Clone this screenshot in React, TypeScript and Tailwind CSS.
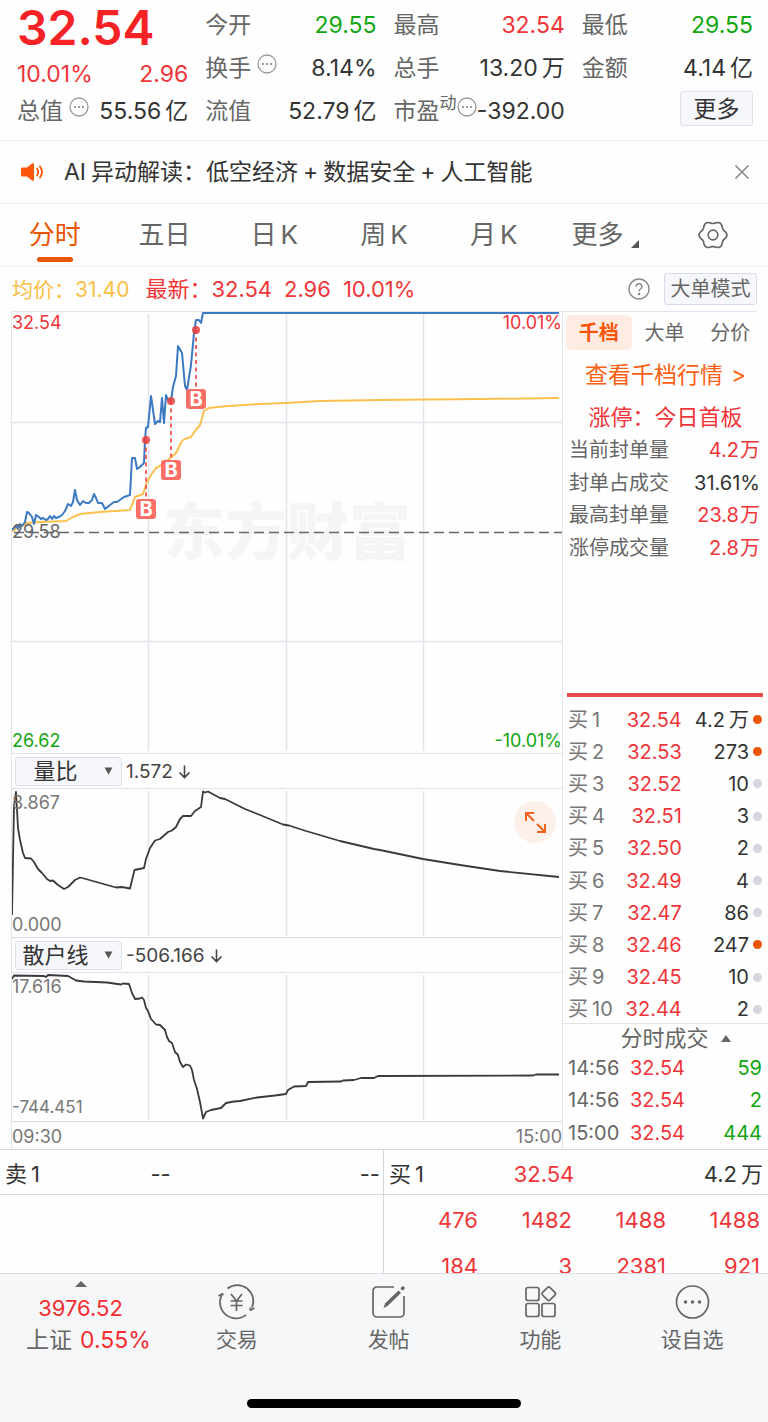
import { useState } from "react";
import type { ReactNode } from "react";

type Tone = "red" | "green" | "dark";

const toneClass: Record<Tone, string> = {
  red: "text-[#f03539]",
  green: "text-[#12a512]",
  dark: "text-[#333333]",
};

const bids = [
  { level: 1, price: "32.54", qty: "4.2", unit: "万", hot: true },
  { level: 2, price: "32.53", qty: "273", hot: true },
  { level: 3, price: "32.52", qty: "10", hot: false },
  { level: 4, price: "32.51", qty: "3", hot: false },
  { level: 5, price: "32.50", qty: "2", hot: false },
  { level: 6, price: "32.49", qty: "4", hot: false },
  { level: 7, price: "32.47", qty: "86", hot: false },
  { level: 8, price: "32.46", qty: "247", hot: true },
  { level: 9, price: "32.45", qty: "10", hot: false },
  { level: 10, price: "32.44", qty: "2", hot: false },
];

const limitStats: { label: string; value: string; unit?: string; tone: Tone }[] = [
  { label: "当前封单量", value: "4.2", unit: "万", tone: "red" },
  { label: "封单占成交", value: "31.61%", tone: "dark" },
  { label: "最高封单量", value: "23.8", unit: "万", tone: "red" },
  { label: "涨停成交量", value: "2.8", unit: "万", tone: "red" },
];

const trades = [
  { time: "14:56", price: "32.54", qty: "59" },
  { time: "14:56", price: "32.54", qty: "2" },
  { time: "15:00", price: "32.54", qty: "444" },
];

const queue = [
  ["476", "1482", "1488", "1488"],
  ["184", "3", "2381", "921"],
];

const priceLine =
  "12,530 15,527 17,526 18,529 20,524 22,526 25,522 27,512 29,513 32,517 34,524 36,515 39,517 41,519 43,518 46,520 48,519 50,516 52,519 54,516 56,518 59,517 62,515 65,511 68,504 71,506 73,502 75,490 77,500 80,505 83,501 86,503 89,503 92,500 94,494 96,498 98,503 102,503 105,509 110,505 114,502 117,502 124,497 130,495 132,458 135,458 137,469 140,467 144,463 145,440 146,428 148,427 151,396 155,424 158,421 160,422 162,398 164,423 166,395 168,400 171,401 173,387 176,376 178,346 182,353 185,386 187,390 191,365 194,333 196,320 199,320 201,323 203,313 559,313";
const averageLine =
  "12,531 27,523 40,522 66,521 73,517 80,514 100,512 130,510 135,497 143,494 147,482 151,475 156,468 160,466 168,460 176,453 182,441 185,439 191,437 195,431 200,425 204,411 209,408 228,406 260,404 286,403 320,401 380,400 480,399 559,398";
const ratioLine =
  "12,915 14,806 16,792 18,828 20,840 23,853 25,858 31,858.5 34,862 38,869 42,873 47,879 50,881 53,880.5 58,885 64,889 68,887 75,880 80,877.5 84,878.5 100,883 116,887.5 122,887 130,888.5 134.5,870 144,868 146,859 150,848 155,840.5 160,839 168,832 172,830.5 176,827 180,819 183,816 191,816 195,811 201,807 203,791.5 205,792.5 208,791.5 220,798 225,799 245,809 260,815 283,824.5 289,825.5 306,831 340,841 374,849 380,850 423,859 460,865 500,871 559,877";
const retailLine =
  "12,979 14,975.5 44,976 46,977 48,975 68,976 76,980.5 84,981.5 107,982.5 121,984.5 123,983.5 129,984 132,993 135,999 140,998.5 142,997.5 144,1000 146,1008 148,1011 151,1019 156,1024.5 160,1025 165,1030 167,1037 169,1041 172,1043 175,1052 178,1055 180,1062 183,1067 186,1064.5 190,1065.5 192,1070 194,1080 197,1089 200,1102 203,1118.5 206,1112 211,1110 221,1108 226,1103 234,1101.5 240,1101 257,1097.5 275,1095.5 286,1094 288,1090 294,1086.5 306,1086 308,1082 341,1081.5 343,1080.5 354,1080 361,1078 374,1078 378,1076 533,1075.5 536,1074.5 559,1074.5";

const gearPath =
  Array.from({ length: 73 }, (_, i) => {
    const a = (i * Math.PI) / 36;
    const r = 12.7 + 1.2 * Math.cos(6 * a);
    return `${i === 0 ? "M" : "L"}${(15 + r * Math.cos(a)).toFixed(2)} ${(15 + r * Math.sin(a)).toFixed(2)}`;
  }).join("") + "Z";

function Unit({ children }: { children: ReactNode }) {
  return <span className="ml-1">{children}</span>;
}

function MoreDots({ label }: { label: string }) {
  return (
    <button aria-label={label} className="mb-[10px] shrink-0">
      <svg width="20" height="20" viewBox="0 0 20 20" fill="none">
        <circle cx="10" cy="10" r="9" stroke="#999" strokeWidth="1.3" />
        <circle cx="6" cy="10" r="1.1" fill="#888" />
        <circle cx="10" cy="10" r="1.1" fill="#888" />
        <circle cx="14" cy="10" r="1.1" fill="#888" />
      </svg>
    </button>
  );
}

function Quote({ label, value, unit, tone = "dark", extra }: { label: string; value: string; unit?: string; tone?: Tone; extra?: ReactNode }) {
  return (
    <div className="flex h-[43px] items-center justify-between whitespace-nowrap">
      <div className="flex items-center text-[#666]">
        <span>{label}</span>
        {extra}
      </div>
      <span className={toneClass[tone]}>
        {value}
        {unit && <Unit>{unit}</Unit>}
      </span>
    </div>
  );
}

function GridLines({ top, bottom }: { top: number; bottom: number }) {
  return (
    <g stroke="#e3e4ed" strokeWidth="1.5">
      {[148.5, 286.5, 423.5].map(x => (
        <line key={x} x1={x} x2={x} y1={top} y2={bottom} />
      ))}
    </g>
  );
}

function IndicatorBar({ id, options, value, onChange, reading }: { id: string; options: string[]; value: string; onChange: (v: string) => void; reading: string }) {
  return (
    <div className="flex h-[35px] items-center border-b border-[#e0e1e9] pl-[3px]">
      <div className="relative">
        <select
          id={id}
          aria-label="指标"
          value={value}
          onChange={e => onChange(e.target.value)}
          className="block h-[29px] w-[107px] appearance-none rounded-[3px] border border-[#dfe1e8] bg-[#f6f7fa] pr-[26px] text-center text-[22px] leading-none text-[#333] [text-align-last:center]"
        >
          {options.map(o => (
            <option key={o}>{o}</option>
          ))}
        </select>
        <svg className="pointer-events-none absolute top-[10px] right-[9px]" width="9" height="8" viewBox="0 0 9 8">
          <path d="M0.5 0.5h8L4.5 7.5z" fill="#555" />
        </svg>
      </div>
      <label htmlFor={id} className="ml-1 flex items-center pt-px text-[19px] text-[#444]">
        {reading}
        <svg className="ml-1" width="15" height="16" viewBox="0 0 15 16" fill="none" stroke="#444" strokeWidth="1.6">
          <path d="M7.5 1.5v12M2.500 8.500l5 5 5-5" />
        </svg>
      </label>
    </div>
  );
}

function BuyMark({ x, from, to }: { x: number; from: number; to: number }) {
  return (
    <g>
      <line x1={x} x2={x} y1={from} y2={to} stroke="#ee5450" strokeWidth="1.8" strokeDasharray="4 3.5" />
      <circle cx={x} cy={from} r="4" fill="#e9403d" fillOpacity="0.85" />
      <rect x={x - 10} y={to - 10} width="20" height="20" rx="3" fill="#fb6f66" />
      <text x={x} y={to + 7} textAnchor="middle" fontSize="20" fontWeight="700" fill="#fff">
        B
      </text>
    </g>
  );
}

const navItems = [
  {
    label: "交易",
    icon: (
      <>
        <path d="M10.500 5.500A16 16 0 0 1 35 24.500M29 31.800A16 16 0 0 1 4.500 12.500M1.500 13l4.500-2.500M6 10.500l-.5 2M37.500 25l-4.500 2.500M33.500 24.500l-.5 3" />
        <path d="m14 11 5.500 7 5.500-7M13.500 18h12M13.500 22.500h12M19.500 18v10" />
      </>
    ),
  },
  {
    label: "发帖",
    icon: (
      <>
        <path d="M25 4H8a4 4 0 0 0-4 4v22a4 4 0 0 0 4 4h23a4 4 0 0 0 4-4V13" />
        <path d="M14.500 25 16 20.500 29.500 7.500 32 10 18.500 23z" fill="#666" stroke="none" />
        <path d="m33.500 5.500.5-.5" strokeWidth="3.500" strokeLinecap="round" />
      </>
    ),
  },
  {
    label: "功能",
    icon: (
      <>
        <rect x="5" y="4.500" width="13" height="13" rx="2" />
        <rect x="5" y="20.500" width="13" height="13" rx="2" />
        <rect x="21" y="20.500" width="13" height="13" rx="2" />
        <rect x="22.500" y="5.500" width="10.500" height="10.500" rx="1.500" transform="rotate(45 27.750 10.750)" />
      </>
    ),
  },
  {
    label: "设自选",
    icon: (
      <>
        <circle cx="19.500" cy="19" r="16" />
        <g fill="#666" stroke="none">
          <circle cx="12.500" cy="19" r="1.800" />
          <circle cx="19.500" cy="19" r="1.800" />
          <circle cx="26.500" cy="19" r="1.800" />
        </g>
      </>
    ),
  },
];

export default function App() {
  const [tab, setTab] = useState("分时");
  const [side, setSide] = useState("千档");
  const [first, setFirst] = useState("量比");
  const [second, setSecond] = useState("散户线");
  const [showNews, setShowNews] = useState(true);

  const tabs = [
    { id: "分时", body: "分时" },
    { id: "五日", body: "五日" },
    { id: "日K", body: <>日<span className="ml-1">K</span></> },
    { id: "周K", body: <>周<span className="ml-1">K</span></> },
    { id: "月K", body: <>月<span className="ml-1">K</span></> },
  ];

  return (
    <div className="w-full overflow-hidden bg-[#fefefe] font-['Inter','Noto_Sans_CJK_SC',sans-serif] leading-none text-[#333]">
      {/* Quote header */}
      <header className="grid grid-cols-4 gap-[17px] border-b border-[#f0f0f2] pt-1 pr-[15px] pb-[7px] pl-[17px] text-[23px] leading-none">
        <div className="whitespace-nowrap">
          <div className="flex h-12 items-center text-[48px] leading-none font-semibold text-[#f62326]">32.54</div>
          <div className="flex h-[38px] items-end justify-between pb-1 text-[#f03539]">
            <span>10.01%</span>
            <span>2.96</span>
          </div>
          <Quote label="总值" value="55.56" unit="亿" extra={<span className="ml-[6px] flex"><MoreDots label="总值说明" /></span>} />
        </div>
        <div>
          <Quote label="今开" value="29.55" tone="green" />
          <Quote label="换手" value="8.14%" extra={<span className="ml-[6px] flex"><MoreDots label="换手说明" /></span>} />
          <Quote label="流值" value="52.79" unit="亿" />
        </div>
        <div>
          <Quote label="最高" value="32.54" tone="red" />
          <Quote label="总手" value="13.20" unit="万" />
          <Quote
            label="市盈"
            value="-392.00"
            extra={
              <>
                <span className="mb-4 text-[17px] leading-none">动</span>
                <MoreDots label="市盈说明" />
              </>
            }
          />
        </div>
        <div>
          <Quote label="最低" value="29.55" tone="green" />
          <Quote label="金额" value="4.14" unit="亿" />
          <div className="flex h-[43px] items-start justify-end pt-px">
            <button className="h-[35px] w-[73px] rounded-[3px] border border-[#dfe1e8] bg-[#f6f7fa] pt-px text-[23px] leading-none">更多</button>
          </div>
        </div>
      </header>

      {showNews && (
        <div className="flex h-[63px] items-center border-b border-[#f0f0f2] pr-[18px] pl-5 text-[23px]">
          <svg className="mr-5 shrink-0" width="24" height="20" viewBox="0 0 24 20" fill="none" stroke="#fb5607" strokeWidth="1.8" strokeLinecap="round">
            <path d="M2.500 5.500H7L12 1.500q2-1 2 1v15q0 2-2 1L7 14.500H2.500Q1 14.500 1 13V7q0-1.500 1.500-1.500z" fill="#fb5607" stroke="none" />
            <path d="M17 6.500q2.500 3.500 0 7M20 4.500q4 5.500 0 11" />
          </svg>
          <a href="#news" className="flex-1 truncate leading-normal">
            AI<span className="ml-[5px]">异动解读：低空经济</span>
            <span className="mx-[5px]">+</span>数据安全<span className="mx-[5px]">+</span>人工智能
          </a>
          <button aria-label="关闭" onClick={() => setShowNews(false)}>
            <svg width="16" height="16" viewBox="0 0 16 16" stroke="#888" strokeWidth="1.6">
              <path d="M1.500 1.500l13 13M14.500 1.500l-13 13" />
            </svg>
          </button>
        </div>
      )}

      {/* Period tabs */}
      <nav className="grid h-[63px] grid-cols-7 border-b border-[#f0f0f2] text-[26px] text-[#666]">
        {tabs.map(t => (
          <button
            key={t.id}
            onClick={() => setTab(t.id)}
            className={`relative flex items-center justify-center leading-none ${tab === t.id ? "text-[#ea5504]" : ""}`}
          >
            {t.body}
            {tab === t.id && <span className="absolute bottom-1 h-[5px] w-9 rounded-full bg-[#ea5504]" />}
          </button>
        ))}
        <button className="flex items-center justify-center gap-2 pl-1 leading-none">
          更多
          <svg className="mt-[18px]" width="8" height="8" viewBox="0 0 8 8">
            <path d="M8 0v8H0z" fill="#555" />
          </svg>
        </button>
        <button aria-label="设置" className="flex items-center justify-center">
          <svg width="30" height="30" viewBox="0 0 30 30" fill="none" stroke="#666" strokeWidth="1.7">
            <path d={gearPath} />
            <circle cx="15" cy="15" r="4.800" />
          </svg>
        </button>
      </nav>

      <div className="flex h-11 items-center justify-between pr-[11px] pl-3 text-[22px] whitespace-nowrap">
        <div className="flex items-center gap-3 text-[#f03539]">
          <span className="mr-1 text-[21px] text-[#fbbf45]">均价：31.40</span>
          <span>最新：32.54</span>
          <span>2.96</span>
          <span>10.01%</span>
        </div>
        <div className="flex items-center gap-[14px] text-[#666]">
          <button aria-label="帮助">
            <svg width="22" height="22" viewBox="0 0 22 22" fill="none" stroke="#888" strokeWidth="1.4">
              <circle cx="11" cy="11" r="10" />
              <path d="M8 8.800q0-3 3-3t3 2.700q0 1.500-1.500 2.500T11 13.500" />
              <circle cx="11" cy="16" r=".6" fill="#888" />
            </svg>
          </button>
          <button className="h-8 w-[93px] rounded-[3px] border border-[#d9dbe6] bg-[#f6f7fa] text-[20px] leading-none">大单模式</button>
        </div>
      </div>

      <div className="mx-[11px] h-px bg-[#e3e4ed]" />

      <main className="flex pl-[11px]">
        {/* Charts */}
        <section className="min-w-0 flex-1 border-x border-[#e3e4ed] text-[18px]">
          <div className="relative border-b border-[#e0e1e9]">
            <div className="absolute inset-0 flex items-center justify-center text-[62px] font-black text-[#f5f5f6]">东方财富</div>
            <svg className="relative block h-[441px] w-full" viewBox="12 312 550 441" preserveAspectRatio="none" fill="none">
              <GridLines top={314} bottom={751} />
              <g stroke="#e3e4ed" strokeWidth="1.5">
                <line x1="12" x2="562" y1="422.500" y2="422.500" />
                <line x1="12" x2="562" y1="641.500" y2="641.500" />
              </g>
              <line x1="14" x2="562" y1="532.500" y2="532.500" stroke="#666" strokeWidth="1.500" strokeDasharray="10 5" />
              <polyline points={averageLine} stroke="#fbc04c" strokeWidth="2" strokeLinejoin="round" />
              <polyline points={priceLine} stroke="#3b79c2" strokeWidth="2" strokeLinejoin="round" />
              <BuyMark x={146} from={440} to={509} />
              <BuyMark x={171} from={401} to={470} />
              <BuyMark x={196} from={330} to={399} />
            </svg>
            <span className="absolute top-[2px] left-0 text-[#f03539]">32.54</span>
            <span className="absolute top-[2px] right-0 text-[#f03539]">10.01%</span>
            <span className="absolute top-[211px] left-0 text-[#666]">29.58</span>
            <span className="absolute bottom-[3px] left-0 text-[#12a512]">26.62</span>
            <span className="absolute right-0 bottom-[3px] text-[#12a512]">-10.01%</span>
          </div>

          <IndicatorBar id="indicator-1" options={["量比", "成交量", "MACD"]} value={first} onChange={setFirst} reading="1.572" />
          <div className="relative border-b border-[#d9dae3] text-[#777]">
            <svg className="block h-[148px] w-full" viewBox="12 789 550 148" preserveAspectRatio="none" fill="none">
              <GridLines top={791} bottom={936} />
              <polyline points={ratioLine} stroke="#3a3a3a" strokeWidth="1.800" strokeLinejoin="round" />
            </svg>
            <span className="absolute top-[5px] left-0">8.867</span>
            <span className="absolute bottom-[3px] left-0">0.000</span>
            <button aria-label="全屏" className="absolute top-3 right-[6px] flex h-[42px] w-[42px] items-center justify-center rounded-full bg-[#fdf0ea]">
              <svg width="22" height="22" viewBox="0 0 22 22" fill="none" stroke="#f0631c" strokeWidth="2">
                <path d="M2 10V2h8M2 2l8 8M21 13v8h-8M21 21l-8-8" />
              </svg>
            </button>
          </div>

          <IndicatorBar id="indicator-2" options={["散户线", "成交量", "MACD"]} value={second} onChange={setSecond} reading="-506.166" />
          <div className="relative border-b border-[#d9dae3] text-[17px] text-[#777]">
            <svg className="block h-[148px] w-full" viewBox="12 973 550 148" preserveAspectRatio="none" fill="none">
              <GridLines top={975} bottom={1120} />
              <polyline points={retailLine} stroke="#3a3a3a" strokeWidth="1.800" strokeLinejoin="round" />
            </svg>
            <span className="absolute top-[5px] left-0 text-[18px]">17.616</span>
            <span className="absolute bottom-[5px] left-0">-744.451</span>
          </div>

          <div className="flex h-[27px] items-center justify-between pt-[2px] text-[#777]">
            <span>09:30</span>
            <span>15:00</span>
          </div>
        </section>

        {/* Order book */}
        <aside className="flex w-[205px] shrink-0 flex-col text-[20px] text-[#666]">
          <div className="mt-[3px] mr-[5px] ml-[3px] flex justify-between">
            {["千档", "大单", "分价"].map(s => (
              <button
                key={s}
                onClick={() => setSide(s)}
                className={`h-[35px] w-[66px] rounded-[5px] leading-none ${side === s ? "bg-[#feece3] font-bold text-[#fb5607]" : ""}`}
              >
                {s}
              </button>
            ))}
          </div>
          <a href="#depth" className="flex h-[50px] items-center justify-center gap-2 text-[23px] text-[#fb5f14]">
            查看千档行情 <span>&gt;</span>
          </a>
          <div className="flex h-[34px] items-center justify-center text-[22px] text-[#f03539]">涨停：今日首板</div>
          <table className="mr-[8px] ml-[6px] h-[130px] whitespace-nowrap">
            <tbody>
              {limitStats.map(s => (
                <tr key={s.label}>
                  <th scope="row" className="p-0 text-left font-normal">{s.label}</th>
                  <td className={`p-0 text-right ${toneClass[s.tone]}`}>
                    {s.value}
                    {s.unit && <span className="ml-px">{s.unit}</span>}
                  </td>
                </tr>
              ))}
            </tbody>
          </table>

          <div className="mt-auto mr-[5px] ml-1 h-1 bg-[#e94b4d]" />
          <table className="mt-1 mr-[6px] ml-[5px] h-[322px] whitespace-nowrap">
            <tbody>
              {bids.map(b => (
                <tr key={b.level}>
                  <th scope="row" className="w-[44px] p-0 pt-[5px] text-left font-normal text-[#777]">
                    买<Unit>{b.level}</Unit>
                  </th>
                  <td className={`w-[69px] p-0 pt-[5px] text-right ${toneClass.red}`}>{b.price}</td>
                  <td className="p-0 pt-[5px] text-[#333]">
                    <div className="flex items-center justify-end gap-1">
                      <span>
                        {b.qty}
                        {b.unit && <Unit>{b.unit}</Unit>}
                      </span>
                      <span className={`size-[9px] rounded-full ${b.hot ? "bg-[#ea5504]" : "bg-[#d5d7de]"}`} />
                    </div>
                  </td>
                </tr>
              ))}
            </tbody>
          </table>

          <button className="flex h-[29px] items-center justify-center gap-3 border-t border-[#e0e1e9] pl-5 text-[22px] leading-none">
            分时成交
            <svg width="10" height="7" viewBox="0 0 10 7">
              <path d="M5 0l5 7H0z" fill="#666" />
            </svg>
          </button>
          <table className="mr-[6px] ml-[5px] h-[97px] whitespace-nowrap">
            <tbody>
              {trades.map((t, i) => (
                <tr key={i}>
                  <td className="w-[54px] p-0 text-left">{t.time}</td>
                  <td className={`w-[63px] p-0 text-right ${toneClass.red}`}>{t.price}</td>
                  <td className={`p-0 text-right ${toneClass.green}`}>{t.qty}</td>
                </tr>
              ))}
            </tbody>
          </table>
        </aside>
      </main>

      {/* Best ask / bid */}
      <section className="grid grid-cols-2 border-t border-[#d5d6e0] text-[22px]">
        <div className="border-r border-[#d5d6e0]">
          <div className="grid h-[45px] grid-cols-[1fr_auto_1fr] items-center border-b border-[#d5d6e0] pt-[3px] pr-[3px] pl-[5px] whitespace-nowrap">
            <span>卖<Unit>1</Unit></span>
            <span className="mr-16">--</span>
            <span className="text-right">--</span>
          </div>
        </div>
        <div>
          <div className="grid h-[45px] grid-cols-[1fr_auto_1fr] items-center border-b border-[#d5d6e0] pt-[3px] pr-[5px] pl-[5px] whitespace-nowrap">
            <span>买<Unit>1</Unit></span>
            <span className="mr-16 text-[#f03539]">32.54</span>
            <span className="text-right">4.2<Unit>万</Unit></span>
          </div>
          <div className="h-[78px] overflow-hidden pt-[2px] pr-2">
            <table className="w-full table-fixed text-[22px] text-[#f03539]">
              <tbody>
                {queue.map((row, i) => (
                  <tr key={i} className="h-[46px]">
                    {row.map((v, j) => (
                      <td key={j} className="p-0 text-right">{v}</td>
                    ))}
                  </tr>
                ))}
              </tbody>
            </table>
          </div>
        </div>
      </section>

      <footer className="border-t border-[#dcdde2] bg-[#f6f7f9] pb-[15px]">
        <div className="flex h-[125px] text-[#666]">
          <button className="flex w-[161px] shrink-0 flex-col items-center pt-[7px] leading-none text-[#f62d30]">
            <svg width="12" height="6" viewBox="0 0 12 6">
              <path d="M6 0l6 6H0z" fill="#666" />
            </svg>
            <span className="mt-[10px] text-[22px]">3976.52</span>
            <span className="mt-[10px] flex items-center gap-2 pl-4 text-[23px] leading-none">
              <span className="text-[#666]">上证</span>0.55%
            </span>
          </button>
          <div className="grid flex-1 grid-cols-4">
            {navItems.map(n => (
              <button key={n.label} className="flex flex-col items-center pt-[9px] text-[21px] leading-none">
                <svg width="39" height="38" viewBox="0 0 39 38" fill="none" stroke="#666" strokeWidth="1.700">
                  {n.icon}
                </svg>
                <span className="mt-2">{n.label}</span>
              </button>
            ))}
          </div>
        </div>
        <div className="mx-auto h-[9px] w-[274px] rounded-full bg-black" />
      </footer>
    </div>
  );
}
